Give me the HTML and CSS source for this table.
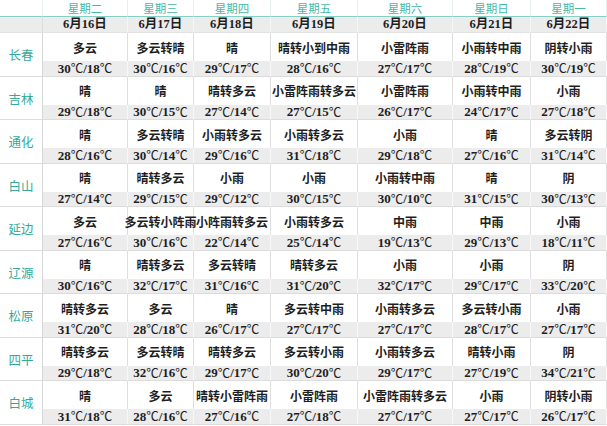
FILE: index.html
```html
<!DOCTYPE html>
<html lang="zh">
<head>
<meta charset="utf-8">
<title>吉林天气预报</title>
<link rel="stylesheet" href="styles.css">
</head>
<body>
<div class="table" id="t"></div>
<script>
var days = ["星期二","星期三","星期四","星期五","星期六","星期日","星期一"];
var dates = ["6月16日","6月17日","6月18日","6月19日","6月20日","6月21日","6月22日"];
var data = [
["长春",[["多云","30℃/18℃"],["多云转晴","30℃/16℃"],["晴","29℃/17℃"],["晴转小到中雨","28℃/16℃"],["小雷阵雨","27℃/17℃"],["小雨转中雨","28℃/19℃"],["阴转小雨","30℃/19℃"]]],
["吉林",[["晴","29℃/18℃"],["晴","30℃/15℃"],["晴转多云","27℃/14℃"],["小雷阵雨转多云","27℃/15℃"],["小雷阵雨","26℃/17℃"],["小雨转中雨","24℃/17℃"],["小雨","27℃/18℃"]]],
["通化",[["晴","28℃/16℃"],["多云转晴","30℃/14℃"],["小雨转多云","29℃/16℃"],["小雨转多云","31℃/18℃"],["小雨","29℃/18℃"],["晴","27℃/16℃"],["多云转阴","31℃/14℃"]]],
["白山",[["晴","27℃/14℃"],["晴转多云","29℃/15℃"],["小雨","29℃/12℃"],["小雨","30℃/15℃"],["小雨转中雨","30℃/10℃"],["晴","31℃/15℃"],["阴","30℃/13℃"]]],
["延边",[["多云","27℃/16℃"],["多云转小阵雨","30℃/16℃"],["小阵雨转多云","22℃/14℃"],["小雨转多云","25℃/14℃"],["中雨","19℃/13℃"],["中雨","29℃/13℃"],["小雨","18℃/11℃"]]],
["辽源",[["晴","30℃/16℃"],["晴转多云","32℃/17℃"],["多云转晴","31℃/16℃"],["晴转多云","31℃/20℃"],["小雨","32℃/17℃"],["小雨","29℃/17℃"],["阴","33℃/20℃"]]],
["松原",[["晴转多云","31℃/20℃"],["多云","28℃/18℃"],["晴","26℃/17℃"],["多云转中雨","27℃/17℃"],["小雨转多云","27℃/17℃"],["多云转小雨","28℃/17℃"],["小雨","27℃/17℃"]]],
["四平",[["晴转多云","29℃/18℃"],["多云转晴","32℃/16℃"],["晴转多云","29℃/17℃"],["多云转小雨","30℃/20℃"],["小雨转多云","29℃/17℃"],["晴转小雨","27℃/19℃"],["阴","34℃/21℃"]]],
["白城",[["晴","31℃/18℃"],["多云","28℃/16℃"],["晴转小雷阵雨","27℃/16℃"],["小雷阵雨","27℃/18℃"],["小雷阵雨转多云","27℃/17℃"],["小雨","27℃/17℃"],["阴转小雨","26℃/17℃"]]]
];
var t = document.getElementById("t");
function cell(cls, text){ var d=document.createElement("div"); d.className=cls; d.textContent=text; t.appendChild(d); return d; }
function tempCell(text){
  var d=document.createElement("div"); d.className="c tmp";
  text.split("℃").forEach(function(part, i, arr){
    if(part) d.appendChild(document.createTextNode(part));
    if(i < arr.length-1){ var s=document.createElement("span"); s.className="deg"; s.textContent="℃"; d.appendChild(s); }
  });
  t.appendChild(d);
}
cell("c day first","");
days.forEach(function(d){ cell("c day", d); });
cell("c date first","");
dates.forEach(function(d){ cell("c date", d); });
data.forEach(function(row){
  cell("c city", row[0]);
  row[1].forEach(function(x){ cell("c wx", x[0]); });
  row[1].forEach(function(x){ tempCell(x[1]); });
});
</script>
</body>
</html>
```
FILE: styles.css
```css
html, body {
  margin: 0;
  padding: 0;
  background: #ffffff;
}
body {
  width: 607px;
  height: 426px;
  overflow: hidden;
  font-family: "Noto Sans CJK SC", sans-serif;
}
.table {
  display: grid;
  grid-template-columns: 43px 85px 66px 77px 87px 95px 78px 76px;
  grid-template-rows: 17px 16px repeat(9, 28px 15.5px);
}
.c {
  box-sizing: border-box;
  display: flex;
  align-items: center;
  justify-content: center;
  white-space: nowrap;
  border-right: 1px solid #dedede;
  font-size: 12px;
  line-height: 1;
  color: #1e1e1e;
}
.day {
  color: #45b8a8;
  font-weight: 400;
  font-size: 11.5px;
  line-height: normal;
  align-items: flex-start;
  border-bottom: 1px solid #86cfc4;
  border-right-color: #e6f1ef;
}
.date {
  background: #ececec;
  font-weight: 700;
  border-right-color: #f6f6f6;
  border-bottom: 1px solid #e2e2e2;
  font-family: "Liberation Serif", "Noto Sans CJK SC", serif;
  font-size: 12.5px;
}
.date.first { border-right-color: #dcdcdc; }
.city {
  grid-row: span 2;
  color: #35a999;
  font-size: 12.5px;
  border-bottom: 1px solid #dcdcdc;
  border-right-color: #d6d6d6;
  padding-top: 2px;
}
.wx {
  font-weight: 700;
  padding-top: 1px;
}
.tmp {
  background: #ececec;
  font-weight: 700;
  font-family: "Liberation Serif", "Noto Sans CJK SC", serif;
  font-size: 13px;
  border-right-color: #f8f8f8;
  border-bottom: 1px solid #dcdcdc;
}
.deg {
  font-family: "Noto Sans CJK SC", sans-serif;
  font-size: 12.5px;
  font-weight: 400;
}
```
